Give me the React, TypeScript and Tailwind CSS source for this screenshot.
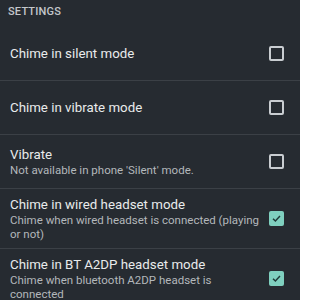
import React from "react";

type Item = { title: string; sub?: string; checked: boolean; h: string };

const items: Item[] = [
  { title: "Chime in silent mode", checked: false, h: "h-[54px]" },
  { title: "Chime in vibrate mode", checked: false, h: "h-[54px]" },
  { title: "Vibrate", sub: "Not available in phone 'Silent' mode.", checked: false, h: "h-[54px]" },
  {
    title: "Chime in wired headset mode",
    sub: "Chime when wired headset is connected (playing or not)",
    checked: true,
    h: "h-[60px]",
  },
  {
    title: "Chime in BT A2DP headset mode",
    sub: "Chime when bluetooth A2DP headset is connected",
    checked: true,
    h: "h-[60px]",
  },
];

function Box({ checked }: { checked: boolean }) {
  if (checked) {
    return (
      <div className="w-[15px] h-[15px] rounded-[2px] bg-[#7fd0bf] flex items-center justify-center">
        <svg width="11" height="11" viewBox="0 0 12 12">
          <path d="M2.2 6.2 L4.8 8.7 L9.8 3.4" fill="none" stroke="#1f3a38" strokeWidth="1.6" />
        </svg>
      </div>
    );
  }
  return <div className="w-[15px] h-[15px] rounded-[2px] border-[2px] border-[#c9cdd1]" />;
}

export default function App() {
  return (
    <div className="w-[300px] h-[300px] overflow-hidden bg-[#262b31] font-['Roboto',sans-serif]">
      <div className="h-[26px] pl-[8px] pt-[4px] text-[11px] font-medium text-[#c3c7cb] tracking-[0.2px]">
        SETTINGS
      </div>
      {items.map((it, i) => (
        <div key={i} className={`${it.h} flex items-center pl-[10px] pr-[16px] ${i > 0 ? "border-t border-[#3b4046]" : ""}`}>
          <div className="flex-1 min-w-0 pr-[10px]">
            <div className="text-[13.3px] leading-[17px] text-[#e9ebec]">{it.title}</div>
            {it.sub && (
              <div className="text-[11.5px] leading-[14px] text-[#b3b7bb]">{it.sub}</div>
            )}
          </div>
          <Box checked={it.checked} />
        </div>
      ))}
    </div>
  );
}
